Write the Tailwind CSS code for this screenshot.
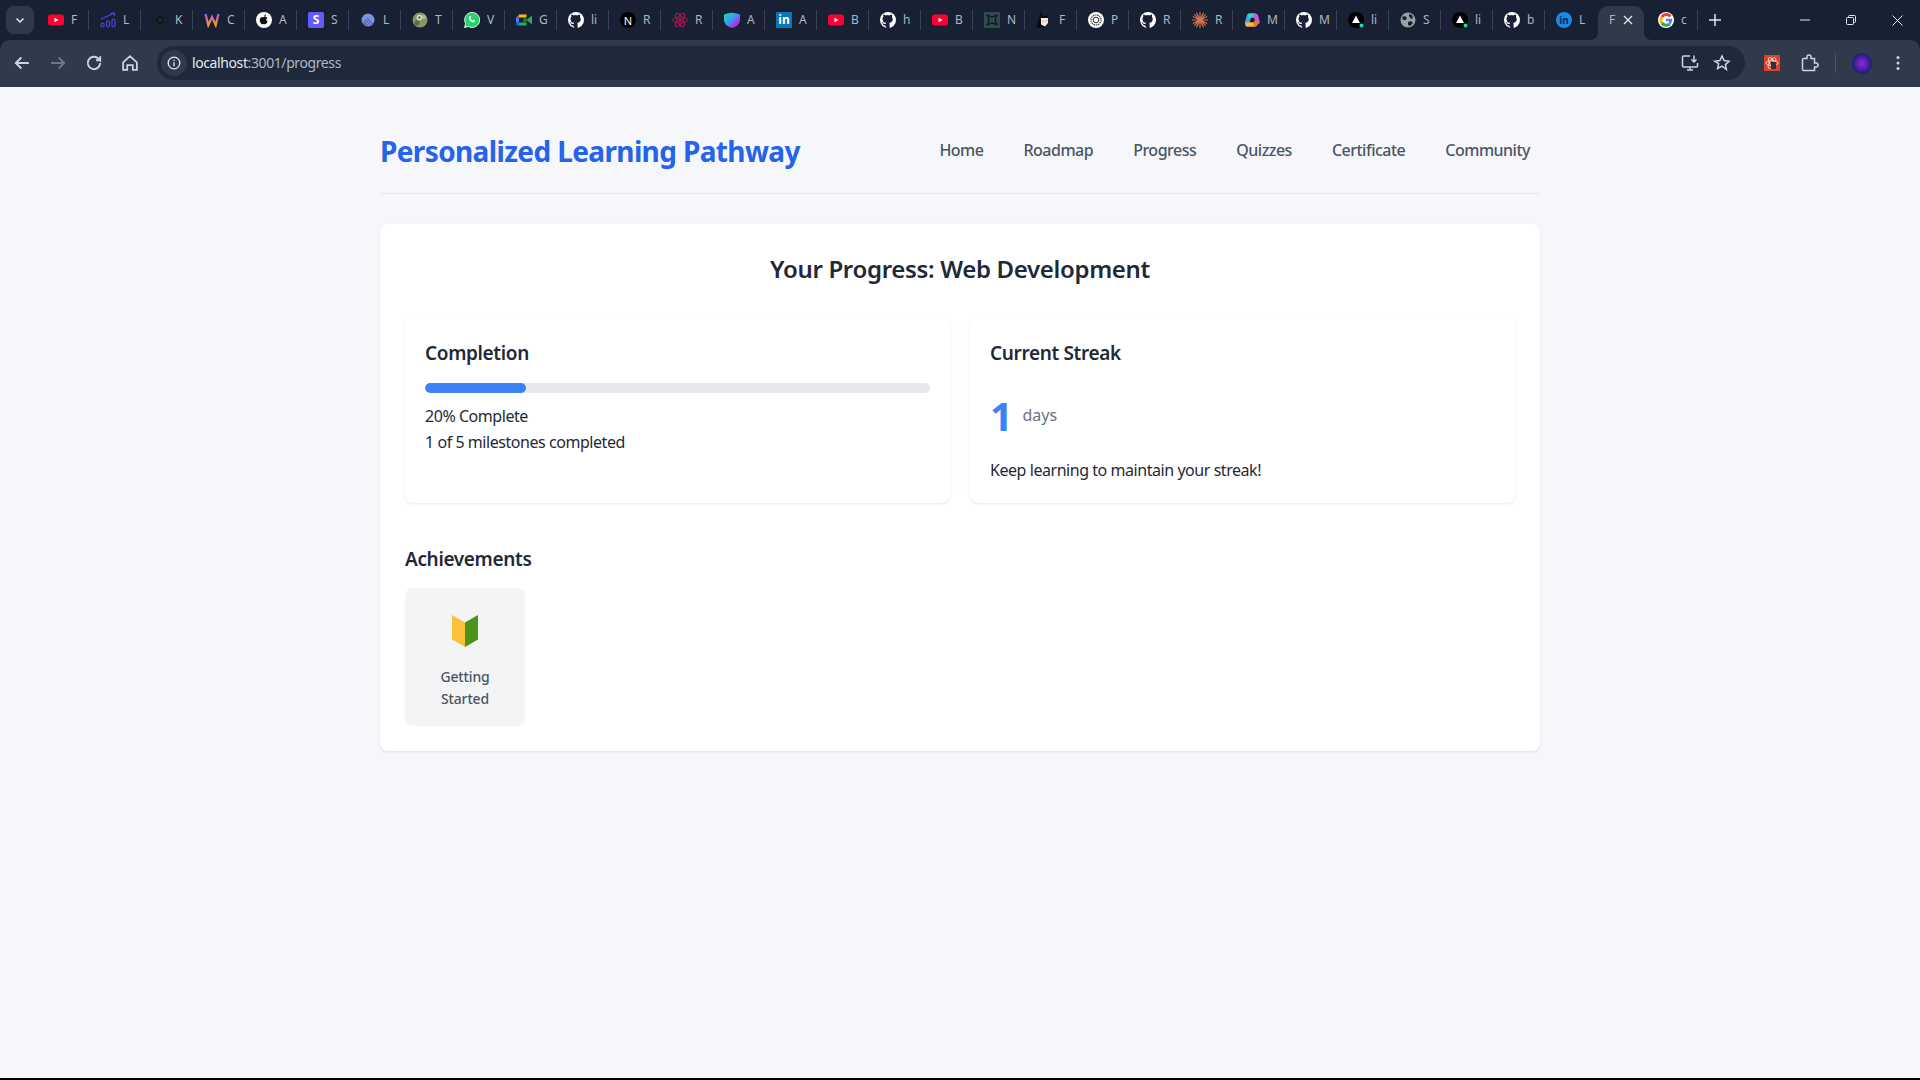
<!DOCTYPE html>
<html lang="en">
<head>
<meta charset="utf-8">
<title>Personalized Learning Pathway</title>
<script src="https://cdn.jsdelivr.net/npm/@tailwindcss/browser@4"></script>
</head>
<body class="h-[1080px] overflow-hidden bg-[#f5f7fb] font-['Noto_Sans',sans-serif] text-[#1f2937] border-b-2 border-black">
<svg class="hidden">
  <symbol id="gh" viewBox="0 0 16 16"><circle cx="8" cy="8" r="8" fill="#fff"/><path fill="#182133" d="M5.600 15.600v-2.200c-2 .4-2.600-.9-2.800-1.400-.1-.3-.5-1-.9-1.200-.3-.2-.7-.5 0-.5s1.100.6 1.300.9c.7 1.200 1.900.9 2.400.7.100-.5.300-.9.500-1.100-1.800-.2-3.600-.9-3.600-3.900 0-.9.300-1.600.8-2.200-.1-.2-.4-1 .1-2.100 0 0 .7-.2 2.200.8a7.500 7.500 0 0 1 4 0c1.500-1 2.200-.8 2.200-.8.400 1.100.200 1.900.1 2.100.5.600.8 1.300.8 2.200 0 3.100-1.900 3.700-3.600 3.900.3.300.5.700.5 1.500v4z"/></symbol>
  <symbol id="yt" viewBox="0 0 16 16"><rect y="2.500" width="16" height="11" rx="2.500" fill="#ff0033"/><path d="M6.500 5.700v4.600L10.500 8z" fill="#fff"/></symbol>
  <symbol id="tri" viewBox="0 0 16 16"><circle cx="8" cy="8" r="8" fill="#000"/><path d="M8 3.500l4 7.500H4z" fill="#fff"/><circle cx="13.500" cy="13.500" r="2" fill="#2dd4a7"/></symbol>
</svg>

<div class="bg-[#182133]">
<!-- tab strip -->
<div class="flex h-10 items-start pl-[6px] text-[12px] text-[#aeb6c2]">
  <div class="mt-[6px] flex h-[28px] w-[28px] items-center justify-center rounded-lg bg-[#303a4b]">
    <svg width="10" height="10" viewBox="0 0 10 10" fill="none" stroke="#e2e8f0" stroke-width="1.500"><path d="M1.500 3.500L5 7l3.500-3.500"/></svg>
  </div>
  <div class="ml-[3px] flex h-10 items-center">
    <div class="flex h-5 w-[52px] items-center gap-[7px] overflow-hidden border-r border-[#3a4455] pl-[11px]"><svg width="16" height="16" class="shrink-0"><use href="#yt"/></svg><span>F</span></div>
    <div class="flex h-5 w-[52px] items-center gap-[7px] overflow-hidden border-r border-[#3a4455] pl-[11px]"><svg width="16" height="16" viewBox="0 0 16 16" class="shrink-0" fill="none" stroke="#4f46e5" stroke-width="1.200"><rect x="1" y="11" width="3" height="4" rx="1.500"/><rect x="6.500" y="9" width="3" height="6" rx="1.500"/><rect x="12" y="7" width="3" height="8" rx="1.500"/><path d="M1 7l8-3.500 5-2.500M11 1h3.500v3"/></svg><span>L</span></div>
    <div class="flex h-5 w-[52px] items-center gap-[7px] overflow-hidden border-r border-[#3a4455] pl-[11px]"><svg width="16" height="16" viewBox="0 0 16 16" class="shrink-0"><circle cx="8" cy="8" r="7.500" fill="#0e131d"/><circle cx="8" cy="8" r="5.500" fill="none" stroke="#2a3040" stroke-width="3" stroke-dasharray="1 1"/><circle cx="8" cy="8" r="2" fill="#232938"/></svg><span>K</span></div>
    <div class="flex h-5 w-[52px] items-center gap-[7px] overflow-hidden border-r border-[#3a4455] pl-[11px]"><svg width="16" height="16" viewBox="0 0 16 16" class="shrink-0" fill="none" stroke-width="2.300"><defs><linearGradient id="wg" x1="0" y1="0" x2="0" y2="1"><stop offset="0" stop-color="#a855f7"/><stop offset="1" stop-color="#f59e0b"/></linearGradient></defs><path d="M1.500 2l2.800 11L8 5l3.700 8L14.500 2" stroke="url(#wg)"/></svg><span>C</span></div>
    <div class="flex h-5 w-[52px] items-center gap-[7px] overflow-hidden border-r border-[#3a4455] pl-[11px]"><svg width="16" height="16" viewBox="0 0 16 16" class="shrink-0"><circle cx="8" cy="8" r="8" fill="#fff"/><path d="M8 5.200c.7-.5 2.500-.7 3.300.8-1.500.9-1.200 2.900.3 3.500-.5 1.300-1.400 2.700-2.400 2.700-.6 0-.8-.3-1.400-.3s-.9.300-1.400.3c-1.300 0-2.700-2.500-2.700-4.300 0-2.400 2.600-3.300 4.300-2.700zM8 4.600c0-1.200 1-2.100 2-2.200 0 1.300-1 2.200-2 2.200z" fill="#111"/></svg><span>A</span></div>
    <div class="flex h-5 w-[52px] items-center gap-[7px] overflow-hidden border-r border-[#3a4455] pl-[11px]"><div class="flex h-4 w-4 shrink-0 items-center justify-center rounded-[2px] bg-[#635bff] text-[12px] leading-none font-bold text-white">S</div><span>S</span></div>
    <div class="flex h-5 w-[52px] items-center gap-[7px] overflow-hidden border-r border-[#3a4455] pl-[11px]"><svg width="16" height="16" viewBox="0 0 16 16" class="shrink-0"><circle cx="8" cy="8" r="6.500" fill="#7d93e0"/><path d="M3 11.500l2 1.500M3.500 9l4 4.500M5 7.500l5.500 5.500M7 6.500l5.500 5" stroke="#2b3a73" stroke-width=".8"/></svg><span>L</span></div>
    <div class="flex h-5 w-[52px] items-center gap-[7px] overflow-hidden border-r border-[#3a4455] pl-[11px]"><svg width="16" height="16" viewBox="0 0 16 16" class="shrink-0"><circle cx="8" cy="8" r="7.500" fill="#8d9468"/><circle cx="5" cy="11" r="2.500" fill="#5f6b45"/><circle cx="12" cy="5" r="2" fill="#b7b98a"/><circle cx="7.500" cy="5.500" r="2.800" fill="#dfe6d8"/><circle cx="7.500" cy="5.500" r="1.300" fill="#2c6f7a"/></svg><span>T</span></div>
    <div class="flex h-5 w-[52px] items-center gap-[7px] overflow-hidden border-r border-[#3a4455] pl-[11px]"><svg width="16" height="16" viewBox="0 0 16 16" class="shrink-0"><path d="M.5 15.500l1.100-3.900A7.500 7.500 0 1 1 4.500 14.500z" fill="#25d366" stroke="#fff" stroke-width=".9"/><path d="M5.500 4.200c-1.200 1-1 2.600.5 4.300 1.500 1.600 3.300 2.300 4.500 1.400.6-.5.700-1 .5-1.300l-1.500-.8-.8.8c-.8-.2-2-1.400-2.300-2.300l.8-.8-.7-1.500c-.3-.2-.6 0-1 .2z" fill="#fff"/></svg><span>V</span></div>
    <div class="flex h-5 w-[52px] items-center gap-[7px] overflow-hidden border-r border-[#3a4455] pl-[11px]"><svg width="16" height="16" viewBox="0 0 16 16" class="shrink-0"><path d="M0 5.500L3 2.500v3z" fill="#ea4335"/><rect x="3" y="2.500" width="7.500" height="3" fill="#fbbc04"/><rect y="5.500" width="3" height="5" fill="#4285f4"/><path d="M0 10.500h3v3H1a1 1 0 0 1-1-1z" fill="#1967d2"/><rect x="3" y="10.500" width="7.500" height="3" fill="#34a853"/><path d="M7.500 5.500h3v5h-3z" fill="#188038"/><path d="M10.500 8L16 3.500v9z" fill="#34a853"/></svg><span>G</span></div>
    <div class="flex h-5 w-[52px] items-center gap-[7px] overflow-hidden border-r border-[#3a4455] pl-[11px]"><svg width="16" height="16" class="shrink-0"><use href="#gh"/></svg><span>li</span></div>
    <div class="flex h-5 w-[52px] items-center gap-[7px] overflow-hidden border-r border-[#3a4455] pl-[11px]"><div class="flex h-4 w-4 shrink-0 items-center justify-center rounded-full bg-black text-[11px] leading-none text-white">N</div><span>R</span></div>
    <div class="flex h-5 w-[52px] items-center gap-[7px] overflow-hidden border-r border-[#3a4455] pl-[11px]"><svg width="16" height="16" viewBox="0 0 16 16" class="shrink-0" fill="none" stroke="#b0174f" stroke-width=".9"><ellipse cx="8" cy="8" rx="7.500" ry="3"/><ellipse cx="8" cy="8" rx="7.500" ry="3" transform="rotate(60 8 8)"/><ellipse cx="8" cy="8" rx="7.500" ry="3" transform="rotate(120 8 8)"/><circle cx="8" cy="8" r="1.300" fill="#b0174f"/></svg><span>R</span></div>
    <div class="flex h-5 w-[52px] items-center gap-[7px] overflow-hidden border-r border-[#3a4455] pl-[11px]"><svg width="16" height="16" viewBox="0 0 16 16" class="shrink-0"><defs><linearGradient id="sh" x1="0" y1="0" x2="1" y2="1"><stop offset="0" stop-color="#14d8a8"/><stop offset=".45" stop-color="#3b9cf0"/><stop offset=".7" stop-color="#a03be8"/><stop offset="1" stop-color="#c026d3"/></linearGradient></defs><path d="M0 2.500Q8 -1 16 2.500V8c0 4-4 7-8 8-4-1-8-4-8-8z" fill="url(#sh)"/></svg><span>A</span></div>
    <div class="flex h-5 w-[52px] items-center gap-[7px] overflow-hidden border-r border-[#3a4455] pl-[11px]"><div class="flex h-4 w-4 shrink-0 items-center justify-center rounded-[1px] bg-[#0a78b5] text-[12px] leading-none font-bold text-white">in</div><span>A</span></div>
    <div class="flex h-5 w-[52px] items-center gap-[7px] overflow-hidden border-r border-[#3a4455] pl-[11px]"><svg width="16" height="16" class="shrink-0"><use href="#yt"/></svg><span>B</span></div>
    <div class="flex h-5 w-[52px] items-center gap-[7px] overflow-hidden border-r border-[#3a4455] pl-[11px]"><svg width="16" height="16" class="shrink-0"><use href="#gh"/></svg><span>h</span></div>
    <div class="flex h-5 w-[52px] items-center gap-[7px] overflow-hidden border-r border-[#3a4455] pl-[11px]"><svg width="16" height="16" class="shrink-0"><use href="#yt"/></svg><span>B</span></div>
    <div class="flex h-5 w-[52px] items-center gap-[7px] overflow-hidden border-r border-[#3a4455] pl-[11px]"><svg width="16" height="16" viewBox="0 0 16 16" class="shrink-0"><rect width="16" height="16" fill="#2f4a52"/><path d="M3.500 3l4.500 2 4.500-2-1.500 5 2 4.500-5-1.500-4.500 2 1.500-5z" fill="none" stroke="#111" stroke-width="1.200"/></svg><span>N</span></div>
    <div class="flex h-5 w-[52px] items-center gap-[7px] overflow-hidden border-r border-[#3a4455] pl-[11px]"><svg width="16" height="16" viewBox="0 0 16 16" class="shrink-0"><path d="M5 0l2 4h3l1-2 1 6-1 6-5 2-6-1 2-6z" fill="#0a0a0a"/><path d="M5 6h7v5l-3 3.500-4-2z" fill="#f1e7e7"/><path d="M6.500 8.500l1 .8M10.500 8.500l-1 .8" stroke="#d33" stroke-width=".9"/></svg><span>F</span></div>
    <div class="flex h-5 w-[52px] items-center gap-[7px] overflow-hidden border-r border-[#3a4455] pl-[11px]"><svg width="16" height="16" viewBox="0 0 16 16" class="shrink-0" fill="none"><circle cx="8" cy="8" r="8" fill="#fff"/><circle cx="8" cy="8" r="5" stroke="#333" stroke-width="1.100" stroke-dasharray="1.500 .7"/><circle cx="8" cy="8" r="2.800" stroke="#333" stroke-width="1"/></svg><span>P</span></div>
    <div class="flex h-5 w-[52px] items-center gap-[7px] overflow-hidden border-r border-[#3a4455] pl-[11px]"><svg width="16" height="16" class="shrink-0"><use href="#gh"/></svg><span>R</span></div>
    <div class="flex h-5 w-[52px] items-center gap-[7px] overflow-hidden border-r border-[#3a4455] pl-[11px]"><svg width="16" height="16" viewBox="0 0 16 16" class="shrink-0" stroke="#d0714f" stroke-width="1.200"><path d="M8 0v16M0 8h16M2.300 2.300l11.400 11.400M13.700 2.300L2.300 13.700M4.500 .8l7 14.400M11.500 .8l-7 14.400M.8 4.500l14.400 7M15.200 4.500L.8 11.500"/></svg><span>R</span></div>
    <div class="flex h-5 w-[52px] items-center gap-[7px] overflow-hidden border-r border-[#3a4455] pl-[11px]"><svg width="16" height="16" viewBox="0 0 16 16" class="shrink-0" fill="none" stroke-width="4.500" stroke-linecap="round"><path d="M5 4.500L3 11" stroke="#3fa7f0"/><path d="M5.500 3.500h5" stroke="#38d0c8"/><path d="M12 4l1.500 6" stroke="#c45be8"/><path d="M3.500 12.500h7" stroke="#f6b73c"/><path d="M12.500 10l-1 2" stroke="#f0713c"/></svg><span>M</span></div>
    <div class="flex h-5 w-[52px] items-center gap-[7px] overflow-hidden border-r border-[#3a4455] pl-[11px]"><svg width="16" height="16" class="shrink-0"><use href="#gh"/></svg><span>M</span></div>
    <div class="flex h-5 w-[52px] items-center gap-[7px] overflow-hidden border-r border-[#3a4455] pl-[11px]"><svg width="16" height="16" class="shrink-0"><use href="#tri"/></svg><span>li</span></div>
    <div class="flex h-5 w-[52px] items-center gap-[7px] overflow-hidden border-r border-[#3a4455] pl-[11px]"><svg width="16" height="16" viewBox="0 0 16 16" class="shrink-0"><circle cx="8" cy="8" r="7.500" fill="#9aa0a6"/><path d="M2 5l3-1 2 2-1 2-3 0zM9 2l3 1 1 3-2 1-2-3zM8 10l3-1 2 2-3 3-2-1z" fill="#182133"/></svg><span>S</span></div>
    <div class="flex h-5 w-[52px] items-center gap-[7px] overflow-hidden border-r border-[#3a4455] pl-[11px]"><svg width="16" height="16" class="shrink-0"><use href="#tri"/></svg><span>li</span></div>
    <div class="flex h-5 w-[52px] items-center gap-[7px] overflow-hidden border-r border-[#3a4455] pl-[11px]"><svg width="16" height="16" class="shrink-0"><use href="#gh"/></svg><span>b</span></div>
    <div class="flex h-5 w-[53px] items-center gap-[7px] pl-[11px]"><div class="flex h-4 w-4 shrink-0 items-center justify-center rounded-full bg-[#1e88e5] text-[10px] leading-none font-bold text-[#0b2a4a]">in</div><span>L</span></div>
    <div class="relative mt-[6px] flex h-[34px] w-[46px] shrink-0 items-center justify-between self-start rounded-t-[10px] bg-[#303a4b] px-[11px] pb-[6px]">
      <span>F</span>
      <svg width="10" height="10" viewBox="0 0 10 10" stroke="#e2e8f0" stroke-width="1.300"><path d="M1 1l8 8M9 1l-8 8"/></svg>
      <div class="absolute bottom-0 -left-2 h-2 w-2 bg-[radial-gradient(circle_at_0_0,transparent_8px,#303a4b_8px)]"></div>
      <div class="absolute -right-2 bottom-0 h-2 w-2 bg-[radial-gradient(circle_at_100%_0,transparent_8px,#303a4b_8px)]"></div>
    </div>
    <div class="flex h-5 w-[54px] items-center gap-[7px] overflow-hidden border-r border-[#3a4455] pl-[14px]"><svg width="16" height="16" viewBox="0 0 16 16" class="shrink-0" fill="none" stroke-width="3"><circle cx="8" cy="8" r="8" fill="#fff" stroke="none"/><path d="M12.500 4.500A5.500 5.500 0 0 0 3.800 5" stroke="#ea4335"/><path d="M3.800 5a5.500 5.500 0 0 0 0 6" stroke="#fbbc04"/><path d="M3.800 11a5.500 5.500 0 0 0 8 .8" stroke="#34a853"/><path d="M8 8h5a5 5 0 0 1-1.500 3.500" stroke="#4285f4" stroke-width="2.500"/></svg><span>c</span></div>
    <div class="ml-[9px] flex w-[16px] items-center justify-center"><svg width="12" height="12" viewBox="0 0 12 12" stroke="#e2e8f0" stroke-width="1.500"><path d="M6 0v12M0 6h12"/></svg></div>
  </div>
  <div class="ml-auto flex h-10 items-center">
    <div class="flex w-[46px] justify-center"><svg width="10" height="10" viewBox="0 0 10 10" stroke="#e2e8f0"><path d="M0 5h10"/></svg></div>
    <div class="flex w-[46px] justify-center"><svg width="10" height="10" viewBox="0 0 10 10" fill="none" stroke="#e2e8f0"><rect x=".5" y="2.500" width="7" height="7" rx="1"/><path d="M2.500 2V1.500a1 1 0 0 1 1-1h5a1 1 0 0 1 1 1v5a1 1 0 0 1-1 1H8"/></svg></div>
    <div class="flex w-[46px] justify-center"><svg width="11" height="11" viewBox="0 0 11 11" stroke="#e2e8f0"><path d="M.5.500l10 10M10.500.500l-10 10"/></svg></div>
  </div>
</div>

<!-- toolbar -->
<div class="flex h-[47px] items-start rounded-t-[10px] bg-[#303a4b] pt-[6px] pr-[20px] pl-[11px]">
  <div class="flex h-[34px] items-center gap-[14px]">
    <svg width="22" height="22" viewBox="0 0 16 16" fill="none" stroke="#cbd5e1" stroke-width="1.400"><path d="M13 8H3.500M7.500 4L3.500 8l4 4"/></svg>
    <svg width="22" height="22" viewBox="0 0 16 16" fill="none" stroke="#6b7686" stroke-width="1.400"><path d="M3 8h9.500M8.500 4l4 4-4 4"/></svg>
    <svg width="22" height="22" viewBox="0 0 16 16" fill="none" stroke="#cbd5e1" stroke-width="1.400"><path d="M12.500 8a4.500 4.500 0 1 1-1.300-3.200L12.500 6V3M12.500 6H9.500"/></svg>
    <svg width="22" height="22" viewBox="0 0 16 16" fill="none" stroke="#cbd5e1" stroke-width="1.300"><path d="M3 7.500L8 3l5 4.500V13h-3V9.500H6V13H3z"/></svg>
  </div>
  <div class="ml-[16px] flex h-[34px] flex-1 items-center rounded-full bg-[#1e293b] pl-[4px]">
    <div class="flex h-[26px] w-[26px] items-center justify-center rounded-full bg-[#303a4b]">
      <svg width="16" height="16" viewBox="0 0 16 16" fill="none" stroke="#e2e8f0" stroke-width="1.300"><circle cx="8" cy="8" r="5.800"/><path d="M8 7.200v4M8 4.800v1.200"/></svg>
    </div>
    <span class="ml-[5px] pb-[2px] text-[14px] tracking-[-0.4px] text-[#e2e8f0]">localhost<span class="text-[#aeb8c6]">:3001/progress</span></span>
    <div class="ml-auto flex items-center gap-[12px] pr-[13px]">
      <svg width="20" height="20" viewBox="0 0 20 20" fill="none" stroke="#cbd5e1" stroke-width="1.500"><path d="M10 3H3.500a1 1 0 0 0-1 1v9a1 1 0 0 0 1 1h13a1 1 0 0 0 1-1v-3M7 17h6M10 14v3M14 2.500v6M11.500 6.500L14 9l2.500-2.500"/></svg>
      <svg width="20" height="20" viewBox="0 0 20 20" fill="none" stroke="#cbd5e1" stroke-width="1.500"><path d="M10 3l2.100 4.600 5 .6-3.700 3.400 1 4.900L10 13.100l-4.400 2.400 1-4.900L2.900 8.200l5-.6z"/></svg>
    </div>
  </div>
  <div class="ml-[19px] flex h-[34px] items-center">
    <svg width="16" height="16" viewBox="0 0 16 16"><rect width="16" height="16" fill="#d9432f"/><g fill="none" stroke="#f8d0c8" stroke-width=".9"><ellipse cx="8" cy="8" rx="6" ry="2.500"/><ellipse cx="8" cy="8" rx="6" ry="2.500" transform="rotate(60 8 8)"/><ellipse cx="8" cy="8" rx="6" ry="2.500" transform="rotate(120 8 8)"/></g><path d="M7 7h5v7H7z" fill="#333"/></svg>
    <svg class="ml-[19px]" width="20" height="20" viewBox="0 0 20 20" fill="none" stroke="#cbd5e1" stroke-width="1.500"><path d="M3.500 6.500a1 1 0 0 1 1-1H8V4a2 2 0 0 1 4 0v1.500h3.500v4.500H17a2 2 0 0 1 0 4h-1.500v3.500h-11a1 1 0 0 1-1-1z"/></svg>
    <div class="ml-[16px] h-5 w-px bg-[#4a5566]"></div>
    <div class="ml-[16px] h-[21px] w-[20px] rounded-full bg-[radial-gradient(circle,#8a2be2,#1a1a6e_75%)]"></div>
    <svg class="ml-[24px]" width="4" height="16" viewBox="0 0 4 16" fill="#cbd5e1"><circle cx="2" cy="2.500" r="1.500"/><circle cx="2" cy="8" r="1.500"/><circle cx="2" cy="13.500" r="1.500"/></svg>
  </div>
</div>
</div>

<!-- page -->
<div class="mx-auto w-[1160px] pt-5 text-[16px] leading-[1.6] tracking-[-0.45px]">
  <header class="flex items-center justify-between border-b border-[#e5e7eb] pt-[21px] pb-[19px]">
    <h1 class="text-[28px] leading-[46px] font-bold tracking-[-0.63px] text-[#2563eb]">Personalized Learning Pathway</h1>
    <nav class="flex gap-5 font-medium tracking-[-0.5px] text-[#4b5563]">
      <a class="px-[10px]">Home</a>
      <a class="px-[10px]">Roadmap</a>
      <a class="px-[10px]">Progress</a>
      <a class="px-[10px]">Quizzes</a>
      <a class="px-[10px]">Certificate</a>
      <a class="px-[10px]">Community</a>
    </nav>
  </header>
  <main class="mt-[30px] rounded-lg bg-white p-[25px] shadow-[0_1px_3px_rgba(0,0,0,0.1)]">
    <h2 class="mb-[29px] pt-px text-center text-[24px] font-semibold tracking-[-0.33px]">Your Progress: Web Development</h2>
    <div class="grid grid-cols-2 gap-5">
      <section class="rounded-lg bg-white p-5 shadow-[0_1px_3px_rgba(0,0,0,0.1)]">
        <h3 class="mb-[14px] text-[19px] leading-[32px] font-semibold tracking-[-0.35px]">Completion</h3>
        <div class="h-[10px] overflow-hidden rounded-full bg-[#e5e7eb]"><div class="h-full w-1/5 rounded-full bg-[#3b82f6]"></div></div>
        <p class="mt-[11px]">20% Complete</p>
        <p>1 of 5 milestones completed</p>
      </section>
      <section class="rounded-lg bg-white px-5 pt-5 pb-[19.200px] shadow-[0_1px_3px_rgba(0,0,0,0.1)]">
        <h3 class="text-[19px] leading-[32px] font-semibold tracking-[-0.35px]">Current Streak</h3>
        <div class="mt-[15px] flex h-[63px] items-center gap-[10px]">
          <span class="text-[40px] leading-none font-bold text-[#3b82f6]">1</span>
          <span class="tracking-normal text-[#6b7280]">days</span>
        </div>
        <p class="mt-[10.600px]">Keep learning to maintain your streak!</p>
      </section>
    </div>
    <h3 class="mt-10 mb-[13px] text-[19px] leading-[32px] font-semibold tracking-[-0.35px]">Achievements</h3>
    <div class="flex">
      <div class="w-[120px] rounded-lg bg-[#f3f4f6] p-[15px] text-center">
        <div class="flex h-[63px] items-start justify-center pt-[12px]">
          <svg width="26" height="32" viewBox="0 0 26 32"><path d="M0 0l13 7.500V32L0 24.500z" fill="#fbc13c"/><path d="M26 0L13 7.500V32l13-7.500z" fill="#4a9418"/></svg>
        </div>
        <p class="text-[14px] font-medium tracking-[-0.15px] text-[#4b5563]">Getting Started</p>
      </div>
    </div>
  </main>
</div>
</body>
</html>
